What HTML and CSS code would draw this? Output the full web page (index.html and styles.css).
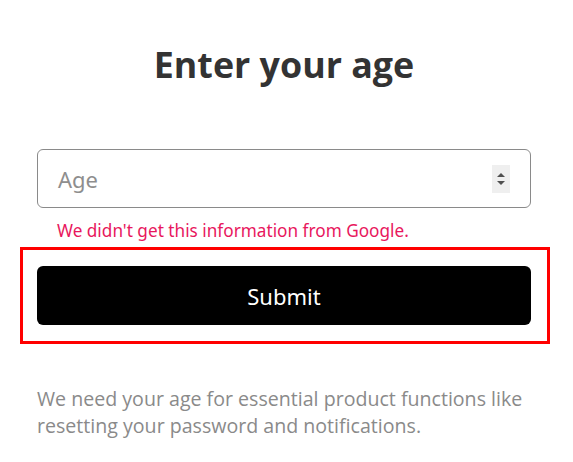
FILE: index.html
```html
<!DOCTYPE html>
<html lang="en">
<head>
<meta charset="utf-8">
<title>Enter your age</title>
<link rel="stylesheet" href="styles.css">
</head>
<body>
<main class="page">
  <h1 class="title">Enter your age</h1>
  <div class="field">
    <span class="placeholder">Age</span>
    <span class="spinner">
      <svg width="10" height="20" viewBox="0 0 10 20"><path d="M1 8 L5 4 L9 8 Z" fill="#505050"/><path d="M1 12 L9 12 L5 16 Z" fill="#505050"/></svg>
    </span>
  </div>
  <p class="error">We didn't get this information from Google.</p>
  <div class="highlight">
    <button class="submit" type="button">Submit</button>
  </div>
  <p class="note">We need your age for essential product functions like resetting your password and notifications.</p>
</main>
</body>
</html>
```
FILE: styles.css
```css
html, body {
  margin: 0;
  padding: 0;
  background: #ffffff;
}
.page {
  width: 494px;
  margin-left: 37px;
  padding-top: 40px;
  display: flex;
  flex-direction: column;
}
.title {
  margin: 0;
  text-align: center;
  font-family: "Open Sans", "Noto Sans", sans-serif;
  font-weight: 700;
  font-size: 35.8px;
  line-height: 48px;
  color: #333333;
}
.field {
  margin-top: 61px;
  height: 57px;
  border: 1px solid #8a8a8a;
  border-radius: 6px;
  display: flex;
  align-items: center;
  justify-content: space-between;
  padding: 0 20px 0 20px;
}
.placeholder {
  font-family: "Noto Sans", "Open Sans", sans-serif;
  font-size: 22px;
  color: #8e8e8e;
}
.spinner {
  width: 18px;
  height: 28px;
  background: #efefef;
  display: flex;
  align-items: center;
  justify-content: center;
}
.error {
  margin: 12px 0 0 20px;
  font-family: "Noto Sans", "Open Sans", sans-serif;
  font-size: 17.2px;
  line-height: 22px;
  color: #e8175d;
}
.highlight {
  margin: 5px 0 0 -17px;
  border: 3px solid #ff0000;
  padding: 16px 16px 16px 14px;
  box-sizing: content-box;
  width: 494px;
}
.submit {
  display: block;
  width: 494px;
  height: 59px;
  border: none;
  border-radius: 6px;
  background: #000000;
  color: #ffffff;
  font-family: "Noto Sans", "Open Sans", sans-serif;
  font-size: 22px;
  cursor: pointer;
}
.note {
  margin: 41px 0 0 0;
  font-family: "Open Sans", "Noto Sans", sans-serif;
  font-size: 19.6px;
  line-height: 27px;
  color: #8a8a8a;
}
```
